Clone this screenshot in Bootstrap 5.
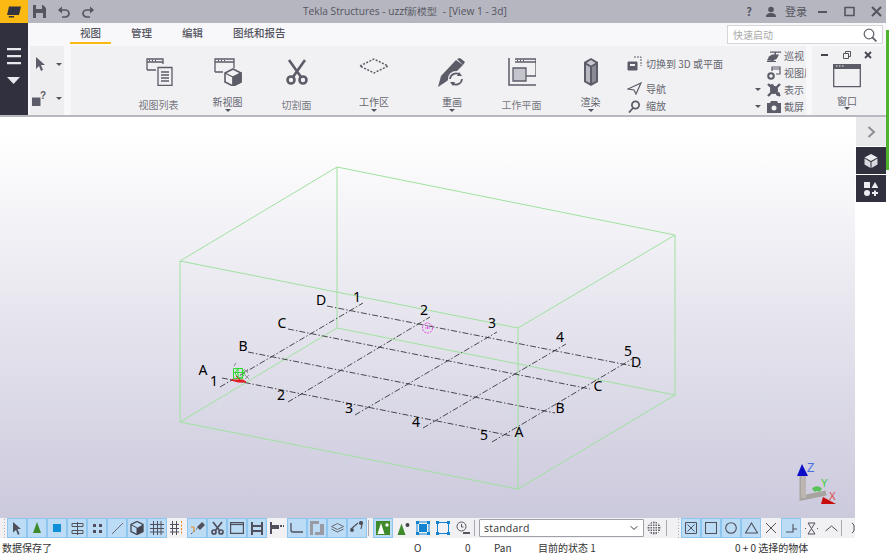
<!DOCTYPE html>
<html lang="zh">
<head>
<meta charset="utf-8">
<title>Tekla Structures</title>
<link href="https://cdn.jsdelivr.net/npm/bootstrap@5.3.0/dist/css/bootstrap.min.css" rel="stylesheet">
<style>
html,body{margin:0;height:100%;overflow:hidden;background:#fff}
body{width:889px;height:559px;font-family:"Noto Sans CJK SC","Open Sans",sans-serif;font-size:10px;color:#66666f;line-height:1.2}
svg{flex:none}
.shell{width:886px;height:557px;flex:none}
.edge{width:3px;flex:none}
.edge-green{height:140px;margin-top:30px;background:#4fb32f}
.titlebar{height:23px;background:#b6b6c0;color:#4c4c58;flex:none}
.logo-box{width:28px;height:23px;background:#fdb913}
.title-tools{width:275px;padding-left:5px;gap:12px}
.apptitle{font-family:"Open Sans",sans-serif;font-size:10.2px;color:#55555f;white-space:nowrap;width:222px}
.title-right{font-size:11px;color:#55555f}
.q-mark{margin-right:13px}
.login-txt{margin-left:8px}
.win-min{margin-left:10px}
.rail{width:28px;background:#30303f;padding-top:25px;gap:12px}
.tabrow{height:23px;background:#f8f8fb;flex:none;padding-left:42px;gap:10px}
.tabitem{padding:0 10px;height:21px;line-height:19px;font-size:10.5px;font-weight:500;color:#55555f;border-bottom:2px solid transparent}
.tabitem-on{border-bottom-color:#fdb913}
.quick-wrap{width:156px;height:19px;margin:2px 3px 0 auto}
.quick{width:100%;height:19px;display:block;border:1px solid #d5d5da;background:#fff;color:#aaa;padding:0 5px;font-size:10px}
.quick-icon{position:absolute;right:6px;top:3px}
.ribbon{height:69px;flex:none;background:#f8f8fb}
.grp-left{width:34px;margin-left:2px;background:#eeeef1;padding:6px 0 0 2px}
.row-sel{height:24px}
.row-help{height:24px;margin-top:10px}
.cursor-ic{margin-left:3px}
.caret-a{margin-left:10px}
.caret-b{margin-left:9px}
.grp-main{width:735px;margin-left:7px;background:#f1f1f4;padding-left:53px;overflow:hidden}
.grp-win{width:73px;margin-left:6px;background:#f1f1f4;padding:4px 3px 0 0}
.win-btns{height:10px;padding:0 10px 0 9px}
.win-label{margin-top:6px;height:13px;line-height:13px}
.ri{flex:none;padding-top:12px}
.w69{width:69px}.w86{width:86px}.w70{width:70px}
.ri-label{height:14px;line-height:14px;margin-top:12px;white-space:nowrap;color:#77777f}
.ri-label-c{margin-top:9px;color:#66666f}
.ri-label-t{margin-top:7px}
.caret-dn{width:0;height:0;border-left:3px solid transparent;border-right:3px solid transparent;border-top:3px solid #55555f}
.col-small{width:128px;margin-left:2px;flex:none;padding-top:9px}
.sm-row{height:18px;gap:4px;white-space:nowrap}
.sm-row-first{margin-bottom:8px}
.col-small2{width:51px;flex:none;padding-top:1px;overflow:hidden}
.sm-row2{height:17.3px;gap:3px;white-space:nowrap}
.caret-slot{width:9px;flex:none;display:flex;justify-content:flex-start}
.sep-line{height:2px;background:#b8b8c0;flex:none}
.work{height:401px;flex:none}
.canvas-area{width:855px;height:401px;background:linear-gradient(#fff 0%,#ffffff 4%,#cbc9dc 100%);flex:none}
.sidebar{width:31px;background:#fff;padding-left:1px}
.side-top{height:29px;background:#e9e9ec;margin-bottom:1px}
.side-dark{height:27px;background:#30303f;margin-bottom:1px}
.toolstrip{height:20px;flex:none;background:#f1f1f4;width:855px;overflow:hidden;padding-left:3px}
.grip{width:4px;height:20px;flex:none;background-image:radial-gradient(#b0b0b8 .7px,transparent .8px);background-size:3px 3px}
.tb{width:20px;height:20px;flex:none;border:1px solid transparent;display:flex;align-items:center;justify-content:center}
.tb-on{background:#bcdcf5;border-color:#8fc6ef}
.tb-sep{width:1px;height:16px;background:#a8a8b0;flex:none;margin:0 4px 0 1px}
.tb-sep-b{margin:0 10px 0 2px}
.tb-last{margin-left:8px;justify-content:flex-start}
.combo{width:165px;height:18px;flex:none;padding:0 20px 0 4px;font:10.5px "Open Sans",sans-serif;letter-spacing:.2px;line-height:16px;color:#333;border:1px solid #a0a0a8;border-radius:1px;background-position:right 4px center;background-size:10px 8px}
.statusbar{height:19px;flex:none;background:#fff;font:10px/19px "Noto Sans CJK SC","Open Sans",sans-serif;color:#333;white-space:nowrap}
.bottomline{height:2px;background:#b8b8c4}
.cell-a{width:414px;padding-left:2px}.cell-b{width:51px}.cell-c{width:29px}.cell-d{width:44px}.cell-e{width:197px}
.lbl{font:14px "Noto Sans",sans-serif;fill:#000}
</style>
</head>
<body class="d-flex">
<div class="shell d-flex flex-column">
  <div class="titlebar d-flex align-items-center">
    <div class="logo-box d-flex align-items-center justify-content-center">
      <svg width="16" height="14" viewBox="0 0 16 14"><path d="M3 1.500h12l-2 8.500H1z" fill="#33333f"/><path d="M3 11h5v1.500H2.500z" fill="#33333f"/></svg>
    </div>
    <div class="title-tools d-flex align-items-center">
      <svg width="13" height="13" viewBox="0 0 13 13"><path d="M0 0h10l3 3v10H0z" fill="#55555f"/><path d="M3 0h6v4H3z" fill="#b6b6c0"/><path d="M3 8h7v5H3z" fill="#b6b6c0"/></svg>
      <svg width="12" height="12" viewBox="0 0 12 12"><path d="M3 4h4.500a3.400 3.400 0 0 1 0 7H4" fill="none" stroke="#55555f" stroke-width="1.700"/><path d="M0 4l4-3.500v7z" fill="#55555f"/></svg>
      <svg width="12" height="12" viewBox="0 0 12 12"><path d="M9 4H4.500a3.400 3.400 0 0 0 0 7H8" fill="none" stroke="#55555f" stroke-width="1.700"/><path d="M12 4L8 .5v7z" fill="#55555f"/></svg>
    </div>
    <div class="apptitle">Tekla Structures - uzzf新模型&nbsp; - [View 1 - 3d]</div>
    <div class="title-right ms-auto d-flex align-items-center">
      <b class="q-mark">?</b>
      <svg width="12" height="12" viewBox="0 0 12 12"><circle cx="6" cy="3.500" r="2.800" fill="#55555f"/><path d="M1 11c0-3 2-4 5-4s5 1 5 4z" fill="#55555f"/></svg>
      <span class="login-txt">登录</span>
      <svg class="win-min" width="11" height="11" viewBox="0 0 11 11"><path d="M1 5h9v2H1z" fill="#55555f"/></svg>
      <svg class="ms-3" width="11" height="11" viewBox="0 0 11 11"><path d="M1 1.500h9v8H1z" fill="none" stroke="#55555f" stroke-width="1.600"/></svg>
      <svg class="ms-3 me-1" width="11" height="11" viewBox="0 0 11 11"><path d="M1 1l9 9M10 1l-9 9" stroke="#55555f" stroke-width="2"/></svg>
    </div>
  </div>
  <div class="d-flex flex-grow-0">
    <div class="rail d-flex flex-column align-items-center">
      <svg width="14" height="17" viewBox="0 0 14 17"><path d="M0 0h14v2.300H0zM0 7h14v2.300H0zM0 14h14v2.300H0z" fill="#e8e8ee"/></svg>
      <svg width="14" height="7" viewBox="0 0 14 7"><path d="M0 0h13L6.500 7z" fill="#e8e8ee"/></svg>
    </div>
    <div class="flex-grow-1 d-flex flex-column">
      <div class="tabrow d-flex align-items-start">
        <div class="tabitem tabitem-on">视图</div>
        <div class="tabitem">管理</div>
        <div class="tabitem">编辑</div>
        <div class="tabitem">图纸和报告</div>
        <div class="quick-wrap position-relative">
          <input class="quick" value="快速启动" aria-label="快速启动">
          <svg class="quick-icon" width="14" height="14" viewBox="0 0 14 14" fill="none" stroke="#66666f" stroke-width="1.300"><circle cx="6" cy="6" r="4.800"/><path d="M9.500 9.500L13.500 13.500" stroke-width="1.800"/></svg>
        </div>
      </div>
      <div class="ribbon d-flex">
        <div class="grp-left d-flex flex-column">
          <div class="row-sel d-flex align-items-center">
            <svg class="cursor-ic" width="11" height="14" viewBox="0 0 11 14"><path d="M1 0l9 8H6l2 5-2 1-2-5-3 3z" fill="#5c5c68"/></svg>
            <div class="caret-dn caret-a"></div>
          </div>
          <div class="row-help d-flex align-items-center">
            <svg width="15" height="16" viewBox="0 0 15 16"><path d="M0 7.500h8.500V16H0z" fill="#5c5c68"/><text x="8" y="8.500" font-size="10" font-weight="700" fill="#5c5c68" font-family="Liberation Sans">?</text></svg>
            <div class="caret-dn caret-b"></div>
          </div>
        </div>
        <div class="grp-main d-flex">
          <div class="ri w69 d-flex flex-column align-items-center">
            <svg width="28" height="28" viewBox="0 0 28 28" fill="none" stroke="#5c5c68" stroke-width="1.300"><path d="M2 12V1h16v5M2 4h16M2 12h9"/><path d="M13 9.500h14v18H13z"/><path d="M16 14h8M16 17h8M16 20h8M16 23h8"/><path d="M4 2.500h1M7 2.500h1M10 2.500h1" stroke-width="1.500"/></svg>
            <div class="ri-label">视图列表</div>
          </div>
          <div class="ri w69 d-flex flex-column align-items-center">
            <svg width="28" height="28" viewBox="0 0 28 28" fill="none" stroke="#5c5c68" stroke-width="1.300"><path d="M1 14V1h19v9M1 4h19M1 14h8"/><path d="M4 2.500h1M7 2.500h1M10 2.500h1" stroke-width="1.500"/><path d="M19 11l8 4v9l-8 4-8-4v-9z" stroke-width="1.600"/><path d="M11 15l8 4 8-4M19 19v9"/><path d="M19 19l8-4v9l-8 4z" fill="#5c5c68"/></svg>
            <div class="ri-label ri-label-c">新视图</div><div class="caret-dn"></div>
          </div>
          <div class="ri w69 d-flex flex-column align-items-center">
            <svg width="24" height="28" viewBox="0 0 24 28" fill="none" stroke="#5c5c68" stroke-width="2.600"><path d="M4 2l12 17M20 2L8 19"/><circle cx="6" cy="22" r="3.500"/><circle cx="18" cy="22" r="3.500"/></svg>
            <div class="ri-label">切割面</div>
          </div>
          <div class="ri w86 d-flex flex-column align-items-center">
            <svg width="30" height="28" viewBox="0 0 30 28" fill="none" stroke="#5c5c68" stroke-width="1.500" stroke-dasharray="2 1.500"><path d="M1 8L15 1l14 7-14 7z"/></svg>
            <div class="ri-label ri-label-c">工作区</div><div class="caret-dn"></div>
          </div>
          <div class="ri w70 d-flex flex-column align-items-center">
            <svg width="30" height="30" viewBox="0 0 30 30"><path d="M1 29l3-11L19 2l7 5L10 23z" fill="#5c5c68"/><path d="M20 1l3-1 5 4-2 3z" fill="#5c5c68"/><circle cx="19" cy="21" r="8" fill="#f1f1f4"/><path d="M13 21a6 6 0 0 1 10-4M25 21a6 6 0 0 1-10 4" fill="none" stroke="#5c5c68" stroke-width="1.700"/><path d="M22 14l3 4-5 0zM16 28l-3-4 5 0z" fill="#5c5c68"/></svg>
            <div class="ri-label ri-label-c ri-label-t">重画</div><div class="caret-dn"></div>
          </div>
          <div class="ri w69 d-flex flex-column align-items-center">
            <svg width="28" height="28" viewBox="0 0 28 28" fill="none" stroke="#5c5c68" stroke-width="1.300"><path d="M1 0v27h27" stroke-width="1.500"/><path d="M7 1h21v17H17M7 4h21" /><path d="M9 2.500h1M12 2.500h1M15 2.500h1" stroke-width="1.500"/><path d="M5 10h13v13H5z" fill="#c4c4cc"/></svg>
            <div class="ri-label">工作平面</div>
          </div>
          <div class="ri w69 d-flex flex-column align-items-center">
            <svg width="16" height="28" viewBox="0 0 16 28"><path d="M1 4l7-4 7 4v20l-7 4-7-4z" fill="#5c5c68"/><path d="M3 7l4 2v16l-4-2z" fill="#b8b8c0"/><path d="M9 9l4-2v16l-4 2z" fill="#8a8a94"/><path d="M8 2l4.500 3L8 7.500 3.500 5z" fill="#c8c8d0"/></svg>
            <div class="ri-label ri-label-c">渲染</div><div class="caret-dn"></div>
          </div>
          <div class="col-small d-flex flex-column">
            <div class="sm-row sm-row-first d-flex align-items-center">
              <svg width="15" height="15" viewBox="0 0 15 15" fill="none" stroke="#5c5c68"><path d="M7 1h7v9" stroke-dasharray="2 1"/><path d="M1 6h9v8H1z" fill="#5c5c68"/><path d="M3 8h5v2H3z" fill="#f1f1f4" stroke="none"/></svg>
              <span>切换到 3D 或平面</span>
            </div>
            <div class="sm-row d-flex align-items-center">
              <svg width="15" height="13" viewBox="0 0 15 13" fill="none" stroke="#5c5c68" stroke-width="1.200"><path d="M1 7l13-6-5 11-2-4z"/></svg><span>导航</span>
            </div>
            <div class="sm-row d-flex align-items-center">
              <svg width="15" height="13" viewBox="0 0 15 13" fill="none" stroke="#5c5c68" stroke-width="1.800"><circle cx="8.500" cy="5" r="3.600"/><path d="M6 8l-4 4.500"/></svg><span>缩放</span>
            </div>
          </div>
          <div class="col-small2 d-flex flex-column">
            <div class="sm-row2 d-flex align-items-center"><span class="caret-slot"></span>
              <svg width="14" height="12" viewBox="0 0 14 12" fill="#5c5c68"><path d="M0 10.500l2-4 3-2h7l-2 4-4 2.500z"/><path d="M3 1.500h11v1.300H3zM7.500 2h1.500v3H7.500zM0 11h9v1H0z"/></svg><span>巡视</span></div>
            <div class="sm-row2 d-flex align-items-center"><span class="caret-slot"></span>
              <svg width="14" height="14" viewBox="0 0 14 14" fill="none" stroke="#5c5c68" stroke-width="1.200"><path d="M5 5V1h8v7H9M5 3h8"/><circle cx="4" cy="10" r="2.800" stroke-width="2"/></svg><span>视图属性</span></div>
            <div class="sm-row2 d-flex align-items-center"><span class="caret-slot"><span class="caret-dn"></span></span>
              <svg width="14" height="14" viewBox="0 0 14 14"><path d="M1 1l12 12M13 1L1 13" stroke="#5c5c68" stroke-width="2.400"/><circle cx="7" cy="7" r="4" fill="#5c5c68"/><circle cx="5" cy="3" r="2" fill="#5c5c68"/><circle cx="11" cy="11" r="2" fill="#5c5c68"/></svg><span>表示</span></div>
            <div class="sm-row2 d-flex align-items-center"><span class="caret-slot"><span class="caret-dn"></span></span>
              <svg width="14" height="12" viewBox="0 0 14 12"><path d="M0 2h3l1-2h6l1 2h3v10H0z" fill="#5c5c68"/><circle cx="7" cy="7" r="2.500" fill="#f1f1f4"/></svg><span>截屏</span></div>
          </div>
        </div>
        <div class="grp-win d-flex flex-column align-items-center">
          <div class="win-btns d-flex justify-content-between align-items-center align-self-stretch">
            <svg width="8" height="8" viewBox="0 0 8 8"><path d="M0 3h7v2H0z" fill="#44444e"/></svg>
            <svg width="8" height="8" viewBox="0 0 8 8" fill="none" stroke="#55555f"><path d="M.5 2.500h5v5h-5zM2.500 2.500V.5h5v5H5.500"/></svg>
            <svg width="8" height="8" viewBox="0 0 8 8"><path d="M1 1l6 6M7 1L1 7" stroke="#44444e" stroke-width="1.800"/></svg>
          </div>
          <svg class="mt-1" width="28" height="24" viewBox="0 0 28 24" fill="none"><path d="M.7.7h26.600v22H.7z" stroke="#5c5c68" stroke-width="1.300"/><path d="M0 0h28v5H0z" fill="#5c5c68"/><path d="M3 2h1.500M6 2h1.500M9 2h1.500" stroke="#f1f1f4" stroke-width="1.200"/></svg>
          <div class="win-label">窗口</div><div class="caret-dn"></div>
        </div>
      </div>
    </div>
  </div>
  <div class="sep-line"></div>
  <div class="work d-flex">
    <div class="canvas-area">
      <svg width="855" height="401" viewBox="0 117 855 401">
        <g fill="none" stroke="#9fe29f" stroke-width="1">
          <path d="M180 261L337 167L675 235L518 328ZM180 422L337 328L675 395L518 489ZM180 261V422M337 167V328M675 235V395M518 328V489"/>
        </g>
        <g fill="none" stroke="#2d2d33" stroke-width=".85" stroke-dasharray="6 2 1.500 2">
          <path d="M222 378L512 436M248 352L555 413M288 329L590 389M327 306L643 368"/>
          <path d="M220 387L363 303M288 402L430 317M355 415L497 332M423 428L566 344M492 442L632 359"/>
        </g>
        <g text-anchor="middle">
          <text x="203" y="375" class="lbl">A</text><text x="243" y="351" class="lbl">B</text><text x="282" y="328" class="lbl">C</text><text x="321" y="305" class="lbl">D</text>
          <text x="519" y="437" class="lbl">A</text><text x="560" y="413" class="lbl">B</text><text x="598" y="391" class="lbl">C</text><text x="636" y="367" class="lbl">D</text>
          <text x="214" y="386" class="lbl">1</text><text x="281" y="400" class="lbl">2</text><text x="349" y="413" class="lbl">3</text><text x="416" y="427" class="lbl">4</text><text x="484" y="440" class="lbl">5</text>
          <text x="357" y="302" class="lbl">1</text><text x="424" y="315" class="lbl">2</text><text x="492" y="328" class="lbl">3</text><text x="560" y="342" class="lbl">4</text><text x="628" y="356" class="lbl">5</text>
        </g>
        <circle cx="427.500" cy="328" r="5" fill="none" stroke="#e040e0" stroke-dasharray="2 1"/>
        <path d="M427.500 325v4M425 328h5" stroke="#e040e0" stroke-width=".7"/>
        <g>
          <path d="M233.500 368.500h9v10h-9zM233.500 372.500h11M238 368.500v10" fill="none" stroke="#2fd82f"/>
          <circle cx="240" cy="373" r="4.500" fill="none" stroke="#2fd82f"/>
          <path d="M231 380h12l3 2h-8zM236 376l4 4" fill="#e02020" stroke="#e02020"/>
          <path d="M234 366l2-3" stroke="#888"/>
          <path d="M244 369l4 4M248 369l-4 4M245 375l4 4M249 375l-4 4" stroke="#777" stroke-width=".7"/>
        </g>
        <g>
          <path d="M802 476v22l24 -5" fill="none" stroke="#a7a39f" stroke-width="5"/>
          <path d="M801 472l5 -0v26h-5z" fill="#bbb6b2"/>
          <path d="M802 464l-5 12h11z" fill="#0d0dc8"/>
          <path d="M823 497l13 7h-15z" fill="#c80d0d"/>
          <path d="M812 489a6 6 0 0 1 10 0l-3 3a3 3 0 0 0-4 0z" fill="#58c258"/>
          <text x="807" y="472" font-family="Liberation Sans" font-size="12" fill="#4a6ee0">Z</text>
          <text x="821" y="487" font-family="Liberation Sans" font-size="10" fill="#30d030">Y</text>
          <text x="829" y="500" font-family="Liberation Sans" font-size="10" fill="#e04040">X</text>
        </g>
      </svg>
    </div>
    <div class="sidebar d-flex flex-column">
      <div class="side-top d-flex align-items-center justify-content-center">
        <svg width="9" height="12" viewBox="0 0 9 12"><path d="M1.500 1l5.500 5-5.500 5" fill="none" stroke="#8e8e96" stroke-width="2"/></svg>
      </div>
      <div class="side-dark d-flex align-items-center justify-content-center">
        <svg width="14" height="14" viewBox="0 0 14 14"><path d="M7 0l6.500 3.500L7 7 .5 3.500z" fill="#ececf0"/><path d="M.5 4.500L6.500 8v6L.5 10.500zM13.500 4.500L7.500 8v6l6-3.500z" fill="#d9d9e0"/></svg>
      </div>
      <div class="side-dark d-flex align-items-center justify-content-center">
        <svg width="14" height="14" viewBox="0 0 14 14" fill="#ececf0"><path d="M0 0h6v6H0zM11 0l3.500 6h-7z"/><circle cx="3" cy="11" r="3"/><path d="M10 8.500h2V10h2v2h-2v2h-2v-2H8v-2h2z"/></svg>
      </div>
    </div>
  </div>
  <div class="toolstrip d-flex align-items-center">
    <div class="grip"></div>
    <div class="tb tb-on"><svg width="10" height="13" viewBox="0 0 10 13"><path d="M1 0l8 7H5.500l2 5-1.500 1-2-5L1 10.500z" fill="#50505c"/></svg></div>
    <div class="tb tb-on"><svg width="12" height="12" viewBox="0 0 12 12"><path d="M6 0l4 11H2z" fill="#3f8a2a"/></svg></div>
    <div class="tb tb-on"><svg width="10" height="10" viewBox="0 0 10 10"><path d="M1 1h8v8H1z" fill="#0f8fd8"/></svg></div>
    <div class="tb tb-on"><svg width="13" height="13" viewBox="0 0 13 13" fill="none" stroke="#50505c"><path d="M1 1.500h11v3H1zM1 8.500h11v3H1zM6.500 0v13"/></svg></div>
    <div class="tb tb-on"><svg width="11" height="11" viewBox="0 0 11 11" fill="#50505c"><path d="M1 1h3v3H1zM7 1h3v3H7zM1 7h3v3H1zM7 7h3v3H7z"/></svg></div>
    <div class="tb tb-on"><svg width="13" height="13" viewBox="0 0 13 13"><path d="M1 12L12 1" stroke="#6a6a74"/></svg></div>
    <div class="tb tb-on"><svg width="14" height="14" viewBox="0 0 14 14"><path d="M7 .5l6 3v7l-6 3-6-3v-7z" fill="none" stroke="#44444e" stroke-width="1.300"/><path d="M7 7l6-3.500v7l-6 3z" fill="#44444e"/><path d="M1 3.500L7 7v6.500" fill="none" stroke="#44444e"/></svg></div>
    <div class="tb tb-on"><svg width="14" height="14" viewBox="0 0 14 14" fill="none" stroke="#50505c"><path d="M0 3.500h14M0 7.500h14M0 11h14M3.500 0v14M7.500 0v14M11 0v14"/></svg></div>
    <div class="tb"><svg width="14" height="14" viewBox="0 0 14 14" fill="none" stroke="#50505c"><path d="M0 3.500h9M0 7.500h9M0 11h9M2.500 0v14M6.500 0v14"/><path d="M11.500 0v14" stroke="#e88a1a" stroke-dasharray="2 1.500"/></svg></div>
    <div class="tb tb-on"><svg width="15" height="14" viewBox="0 0 15 14"><path d="M1 13L14 1" stroke="#50505c" stroke-dasharray="2 1.500"/><path d="M7 6l5-5 3 3-5 5z" fill="#50505c"/><path d="M1 6h3v5" fill="none" stroke="#e88a1a"/></svg></div>
    <div class="tb tb-on"><svg width="13" height="14" viewBox="0 0 13 14" fill="none" stroke="#50505c" stroke-width="1.700"><path d="M2 1l7 9M11 1L4 10"/><circle cx="3" cy="11" r="2"/><circle cx="10" cy="11" r="2"/></svg></div>
    <div class="tb tb-on"><svg width="14" height="12" viewBox="0 0 14 12" fill="none" stroke="#50505c" stroke-width="1.200"><path d="M.6.600h12.800v10.800H.6z"/><path d="M.6 2.500h12.800"/></svg></div>
    <div class="tb tb-on"><svg width="12" height="13" viewBox="0 0 12 13" fill="#50505c"><path d="M0 0h2v13H0zM10 0h2v13h-2zM0 3h12v2H0zM0 8h12v2H0z"/></svg></div>
    <div class="tb"><svg width="14" height="12" viewBox="0 0 14 12" fill="#50505c"><path d="M0 0h2v12H0zM2 3h7v4H2zM10 3h2v2h-2zM13 3h1v2h-1z"/></svg></div>
    <div class="tb tb-on"><svg width="14" height="10" viewBox="0 0 14 10" fill="none" stroke="#50505c" stroke-width="1.300"><path d="M1 0v7a2 2 0 0 0 2 2h10"/></svg></div>
    <div class="tb tb-on"><svg width="14" height="14" viewBox="0 0 14 14" fill="#9a9aa4"><path d="M0 0h9v3H3v11H0zM10 3h4v11H5v-3h5z"/></svg></div>
    <div class="tb tb-on"><svg width="13" height="11" viewBox="0 0 13 11" fill="none" stroke="#6a6a74"><path d="M6.500 .5l6 3-6 3-6-3zM.5 6l6 3 6-3"/></svg></div>
    <div class="tb tb-on"><svg width="14" height="14" viewBox="0 0 14 14" fill="none" stroke="#50505c" stroke-width="1.200"><path d="M1 8l7-6M12 3l-1 5" /><circle cx="2" cy="9" r="1.300" fill="#50505c"/><circle cx="11" cy="2" r="1.500" fill="#50505c"/></svg></div>
    <div class="tb-sep"></div>
    <div class="tb tb-on"><svg width="14" height="14" viewBox="0 0 14 14"><path d="M0 0h14v14H0z" fill="#3f8a2a"/><path d="M5 2L1.500 13h7z" fill="#fff"/><circle cx="11" cy="4" r="1.700" fill="#fff"/></svg></div>
    <div class="tb"><svg width="13" height="13" viewBox="0 0 13 13"><path d="M4.500 1.500L.5 13h8z" fill="#3f8a2a"/><circle cx="10.500" cy="3" r="2" fill="#44444e"/></svg></div>
    <div class="tb"><svg width="14" height="14" viewBox="0 0 14 14" fill="#1283cf"><path d="M3 3h8v8H3z"/><path d="M0 0h3v3H0zM11 0h3v3h-3zM0 11h3v3H0zM11 11h3v3h-3z"/><path d="M1 3v8M13 3v8M3 1h8M3 13h8" stroke="#1283cf"/></svg></div>
    <div class="tb"><svg width="14" height="14" viewBox="0 0 14 14" fill="#1283cf"><path d="M0 0h3v3H0zM11 0h3v3h-3zM0 11h3v3H0zM11 11h3v3h-3z"/><path d="M1.500 3v8M12.500 3v8M3 1.500h8M3 12.500h8" stroke="#1283cf"/></svg></div>
    <div class="tb"><svg width="14" height="14" viewBox="0 0 14 14" fill="none" stroke="#55555f"><circle cx="5.500" cy="5.500" r="4.500"/><path d="M5.500 3v3h2"/><path d="M7 12h7" stroke-width="2"/></svg></div>
    <div class="tb-sep"></div>
    <select class="form-select combo" aria-label="standard"><option>standard</option></select>
    <div class="tb"><svg width="14" height="14" viewBox="0 0 14 14"><circle cx="7" cy="7" r="6.500" fill="#666670"/><path d="M0 3h14M0 5.500h14M0 8h14M0 10.500h14M3 0v14M5.500 0v14M8 0v14M10.500 0v14" stroke="#f1f1f4"/></svg></div>
    <div class="tb-sep tb-sep-b"></div>
    <div class="grip"></div>
    <div class="tb tb-on"><svg width="12" height="12" viewBox="0 0 12 12" fill="none" stroke="#50505c"><path d="M.5.500h11v11H.5zM2.500 2.500l7 7M9.500 2.500l-7 7"/></svg></div>
    <div class="tb tb-on"><svg width="12" height="12" viewBox="0 0 12 12" fill="none" stroke="#50505c" stroke-width="1.100"><path d="M.5.500h11v11H.5z"/></svg></div>
    <div class="tb tb-on"><svg width="12" height="12" viewBox="0 0 12 12" fill="none" stroke="#50505c" stroke-width="1.100"><circle cx="6" cy="6" r="5.300"/></svg></div>
    <div class="tb tb-on"><svg width="13" height="12" viewBox="0 0 13 12" fill="none" stroke="#50505c" stroke-width="1.100"><path d="M6.500 1l6 10H.5z"/></svg></div>
    <div class="tb"><svg width="12" height="12" viewBox="0 0 12 12" fill="none" stroke="#50505c"><path d="M1 1l10 10M11 1L1 11"/></svg></div>
    <div class="tb tb-on"><svg width="13" height="12" viewBox="0 0 13 12" fill="none" stroke="#50505c" stroke-width="1.100"><path d="M1 10h7V2M8 7h4"/></svg></div>
    <div class="tb"><svg width="13" height="13" viewBox="0 0 13 13" fill="none" stroke="#50505c"><path d="M3 1h7L3 12h7z"/><path d="M0 6.500h1M12 6.500h1" stroke-dasharray="1 1"/></svg></div>
    <div class="tb"><svg width="13" height="9" viewBox="0 0 13 9" fill="none" stroke="#50505c"><path d="M.5 7l6-5 6 5"/></svg></div>
    <div class="tb-sep mx-0"></div>
    <div class="tb tb-last"><svg width="8" height="12" viewBox="0 0 8 12" fill="none" stroke="#50505c"><path d="M1 1l2 2v6l-2 2"/></svg></div>
  </div>
  <div class="statusbar d-flex">
    <div class="cell-a">数据保存了</div>
    <div class="cell-b">O</div>
    <div class="cell-c">0</div>
    <div class="cell-d">Pan</div>
    <div class="cell-e">目前的状态 1</div>
    <div>0 + 0 选择的物体</div>
  </div>
  <div class="bottomline"></div>
</div>
<div class="edge"><div class="edge-green"></div></div>
<script src="https://cdn.jsdelivr.net/npm/bootstrap@5.3.0/dist/js/bootstrap.bundle.min.js"></script>
</body>
</html>
